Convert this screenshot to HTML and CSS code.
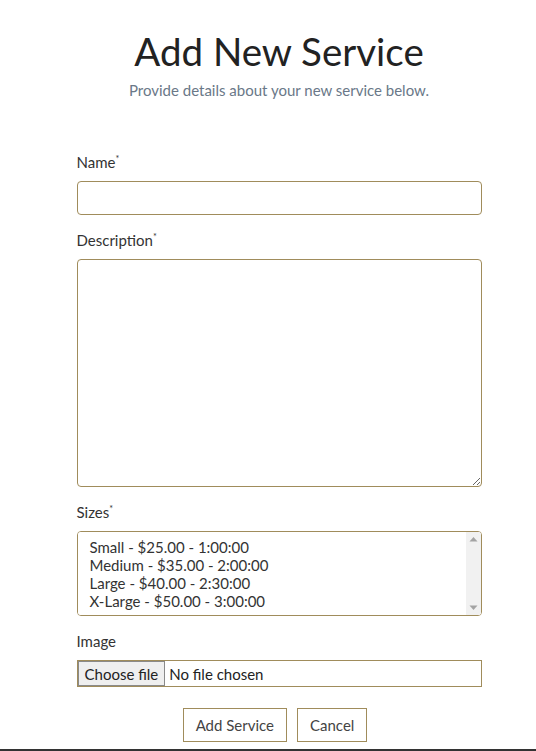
FILE: index.html
```html
<!DOCTYPE html>
<html lang="en">
<head>
<meta charset="utf-8">
<title>Add New Service</title>
<link rel="stylesheet" href="styles.css">
</head>
<body>
<main class="page">
  <header class="heading">
    <h1 class="title">Add New Service</h1>
    <p class="subtitle">Provide details about your new service below.</p>
  </header>
  <form class="form">
    <div class="field">
      <label class="label" for="name">Name<span class="req">*</span></label>
      <input class="input" id="name" type="text">
    </div>
    <div class="field">
      <label class="label" for="desc">Description<span class="req">*</span></label>
      <textarea class="textarea" id="desc"></textarea>
    </div>
    <div class="field">
      <label class="label" for="sizes">Sizes<span class="req">*</span></label>
      <div class="select-wrap">
        <select class="select" id="sizes" multiple>
          <option>Small - $25.00 - 1:00:00</option>
          <option>Medium - $35.00 - 2:00:00</option>
          <option>Large - $40.00 - 2:30:00</option>
          <option>X-Large - $50.00 - 3:00:00</option>
        </select>
        <span class="scrollbar" aria-hidden="true">
          <svg class="arrow" width="15" height="15" viewBox="0 0 15 15"><polygon points="3.5,9.5 11.5,9.5 7.5,5" fill="#a3a3a3"/></svg>
          <svg class="arrow" width="15" height="15" viewBox="0 0 15 15"><polygon points="3.5,5.5 11.5,5.5 7.5,10" fill="#a3a3a3"/></svg>
        </span>
      </div>
    </div>
    <div class="field">
      <span class="label">Image</span>
      <label class="file" for="image">
        <span class="file-btn">Choose file</span>
        <span class="file-name">No file chosen</span>
        <input class="file-input" id="image" type="file">
      </label>
    </div>
    <div class="actions">
      <button class="btn" type="submit">Add Service</button>
      <button class="btn" type="button">Cancel</button>
    </div>
  </form>
</main>
<footer class="footer"></footer>
</body>
</html>
```
FILE: styles.css
```css
html, body {
  margin: 0;
  padding: 0;
}
body {
  font-family: "Lato", "Liberation Sans", sans-serif;
  color: #333;
  background: #fff;
}
.page {
  padding-left: 22px;
}
.heading {
  text-align: center;
  width: 405px;
  margin: 0 auto;
  padding-top: 27px;
}
.title {
  font-weight: 400;
  font-size: 38.5px;
  line-height: 48px;
  margin: 0;
  color: #222;
}
.subtitle {
  margin: 5px 0 0;
  font-size: 15px;
  line-height: 20px;
  color: #6a7888;
}
.form {
  width: 405px;
  margin: 51px auto 0;
}
.field {
  display: flex;
  flex-direction: column;
  margin-bottom: 14px;
}
.label {
  font-size: 15px;
  line-height: 22px;
  margin-bottom: 8px;
  color: #333;
}
.req {
  font-size: 9px;
  vertical-align: top;
  line-height: 16px;
}
.input, .textarea, .select, .file {
  box-sizing: border-box;
  width: 100%;
  border: 1px solid #a08c5b;
  font-family: inherit;
  font-size: 15px;
  margin: 0;
  background: #fff;
}
.input {
  height: 34px;
  border-radius: 4px;
}
.textarea {
  height: 228px;
  border-radius: 4px;
  resize: vertical;
}
.select-wrap {
  position: relative;
  height: 85px;
}
.select {
  display: block;
  height: 85px;
  border-radius: 4px;
  padding: 6px 16px 8px 12px;
  color: #333;
}
.select option {
  line-height: 18px;
  padding: 0;
}
.scrollbar {
  position: absolute;
  top: 1px;
  right: 1px;
  bottom: 1px;
  width: 15px;
  background: #f1f1f1;
  border-radius: 0 3px 3px 0;
  display: flex;
  flex-direction: column;
  justify-content: space-between;
  pointer-events: none;
}
.arrow {
  display: block;
}
.file {
  display: flex;
  align-items: stretch;
  height: 27px;
  padding: 0;
  color: #222;
  cursor: pointer;
}
.file-btn {
  display: flex;
  align-items: center;
  padding: 0 6px;
  background: #efefef;
  border: 1px solid #8a8a8a;
  color: #222;
  margin-right: 4px;
}
.file-name {
  display: flex;
  align-items: center;
}
.file-input {
  display: none;
}
.actions {
  display: flex;
  justify-content: center;
  gap: 10px;
  padding-right: 8px;
  margin-top: 21px;
}
.btn {
  font-family: inherit;
  font-size: 15px;
  height: 34px;
  padding: 0 12px;
  background: #fff;
  border: 1px solid #a08c5b;
  color: #444;
}
.footer {
  position: fixed;
  left: 0;
  right: 0;
  top: 749px;
  height: 4px;
  background: #333;
}
```
